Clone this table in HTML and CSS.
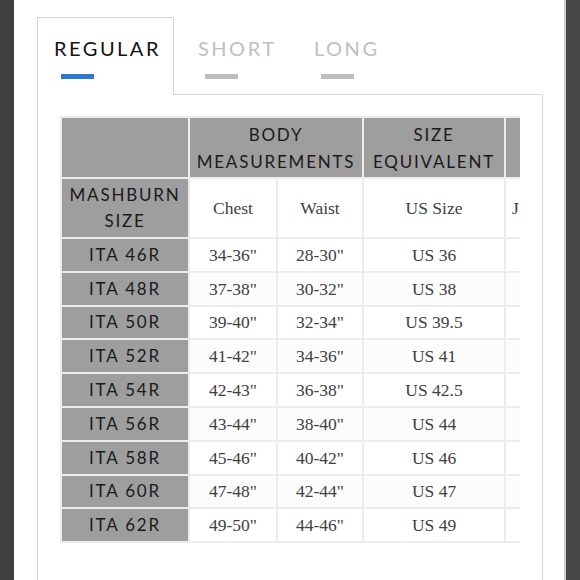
FILE: index.html
```html
<!DOCTYPE html>
<html lang="en">
<head>
<meta charset="utf-8">
<title>Size Chart</title>
<link rel="stylesheet" href="styles.css">
</head>
<body>
<div class="frame">
  <div class="edge edge-left"></div>
  <main class="main">
    <nav class="tabs">
      <div class="tab tab-active">
        <span class="tab-label">REGULAR</span>
        <span class="tab-bar"></span>
      </div>
      <div class="tab tab-short">
        <span class="tab-label">SHORT</span>
        <span class="tab-bar"></span>
      </div>
      <div class="tab tab-long">
        <span class="tab-label">LONG</span>
        <span class="tab-bar"></span>
      </div>
    </nav>
    <section class="panel">
      <div class="table-clip">
        <table class="chart">
          <colgroup>
            <col class="c1"><col class="c2"><col class="c3"><col class="c4"><col class="c5">
          </colgroup>
          <thead>
            <tr class="head1">
              <th class="hd"></th>
              <th class="hd" colspan="2">BODY<br>MEASUREMENTS</th>
              <th class="hd">SIZE<br>EQUIVALENT</th>
              <th class="hd"></th>
            </tr>
            <tr class="head2">
              <th class="hd">MASHBURN<br>SIZE</th>
              <td class="val">Chest</td>
              <td class="val">Waist</td>
              <td class="val">US Size</td>
              <td class="val val-cut">J</td>
            </tr>
          </thead>
          <tbody>
            <tr><th class="hd">ITA 46R</th><td class="val">34-36"</td><td class="val">28-30"</td><td class="val">US 36</td><td class="val"></td></tr>
            <tr><th class="hd">ITA 48R</th><td class="val">37-38"</td><td class="val">30-32"</td><td class="val">US 38</td><td class="val"></td></tr>
            <tr><th class="hd">ITA 50R</th><td class="val">39-40"</td><td class="val">32-34"</td><td class="val">US 39.5</td><td class="val"></td></tr>
            <tr><th class="hd">ITA 52R</th><td class="val">41-42"</td><td class="val">34-36"</td><td class="val">US 41</td><td class="val"></td></tr>
            <tr><th class="hd">ITA 54R</th><td class="val">42-43"</td><td class="val">36-38"</td><td class="val">US 42.5</td><td class="val"></td></tr>
            <tr><th class="hd">ITA 56R</th><td class="val">43-44"</td><td class="val">38-40"</td><td class="val">US 44</td><td class="val"></td></tr>
            <tr><th class="hd">ITA 58R</th><td class="val">45-46"</td><td class="val">40-42"</td><td class="val">US 46</td><td class="val"></td></tr>
            <tr><th class="hd">ITA 60R</th><td class="val">47-48"</td><td class="val">42-44"</td><td class="val">US 47</td><td class="val"></td></tr>
            <tr><th class="hd">ITA 62R</th><td class="val">49-50"</td><td class="val">44-46"</td><td class="val">US 49</td><td class="val"></td></tr>
          </tbody>
        </table>
      </div>
    </section>
  </main>
  <div class="edge edge-right"></div>
</div>
</body>
</html>
```

FILE: styles.css
```css
* { box-sizing: border-box; }

html, body {
  margin: 0;
  padding: 0;
  background: #ffffff;
}

.frame {
  display: flex;
  width: 580px;
  height: 580px;
  overflow: hidden;
}

.edge {
  flex: none;
  height: 100%;
}

.edge-left {
  width: 14px;
  background: #3f3f3f;
}

.edge-right {
  width: 16px;
  background: #464646;
  border-left: 2px solid #cfcfcf;
}

.main {
  flex: 1;
  display: flex;
  flex-direction: column;
  padding: 17px 0 0 23px;
  background: #ffffff;
}

/* Tabs */
.tabs {
  display: flex;
  align-items: flex-start;
  font-family: Lato, "Open Sans", sans-serif;
}

.tab {
  display: flex;
  flex-direction: column;
  align-items: flex-start;
}

.tab-label {
  font-size: 20px;
  line-height: 24px;
  letter-spacing: 2.5px;
  color: #c0c0c0;
}

.tab-bar {
  display: block;
  width: 33px;
  height: 5px;
  margin: 14px 0 0 7px;
  background: #bdbdbd;
}

.tab-active {
  position: relative;
  z-index: 1;
  width: 137px;
  height: 78px;
  margin-bottom: -1px;
  padding: 18px 0 0 16px;
  border: 1px solid #d4d4d4;
  border-bottom: none;
  background: #ffffff;
}

.tab-active .tab-label {
  color: #141414;
}

.tab-active .tab-bar {
  background: #2c78d2;
}

.tab-short {
  width: 116px;
  margin-left: 24px;
  padding-top: 19px;
}

.tab-long {
  padding-top: 19px;
}

/* Panel */
.panel {
  flex: 1;
  width: 506px;
  border: 1px solid #d4d4d4;
  border-bottom: none;
  padding: 21px 0 0 22px;
}

.table-clip {
  width: 460px;
  overflow: hidden;
}

.chart {
  border-collapse: separate;
  border-spacing: 2px;
  background: #ececec;
  table-layout: fixed;
  width: 560px;
}

.c1 { width: 126px; }
.c2 { width: 86px; }
.c3 { width: 84px; }
.c4 { width: 140px; }
.c5 { width: 116px; }

.chart th,
.chart td {
  padding: 0;
  text-align: center;
  vertical-align: middle;
}

.head1 th { height: 59px; }
.head2 th, .head2 td { height: 58px; }
.chart tbody th, .chart tbody td { height: 31.8px; }

.hd {
  background: #9e9e9e;
  color: #1a1a1a;
  font-family: Lato, "Open Sans", sans-serif;
  font-weight: 400;
  font-size: 17px;
  line-height: 26px;
  letter-spacing: 1.8px;
}

.head1 .hd { line-height: 27px; }

.val {
  background: #ffffff;
  color: #404040;
  font-family: "Liberation Serif", "Times New Roman", serif;
  font-size: 17.5px;
  line-height: 20px;
}

.chart tbody tr:nth-child(even) .val { background: #fcfcfc; }

.chart .val-cut {
  text-align: left;
  padding-left: 6px;
}
```
